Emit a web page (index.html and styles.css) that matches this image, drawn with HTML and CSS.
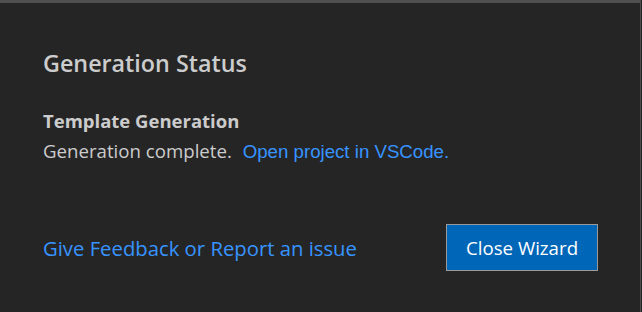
FILE: index.html
```html
<!DOCTYPE html>
<html>
<head>
<meta charset="utf-8">
<link rel="stylesheet" href="styles.css">
</head>
<body>
<div class="panel">
  <h2 class="title">Generation Status</h2>
  <div class="section">
    <div class="label">Template Generation</div>
    <div class="status">Generation complete. <a class="open-link" href="#">Open project in VSCode.</a></div>
  </div>
  <div class="footer">
    <a class="feedback" href="#">Give Feedback or Report an issue</a>
    <button class="close-btn">Close Wizard</button>
  </div>
</div>
</body>
</html>
```
FILE: styles.css
```css
html, body {
  margin: 0;
  padding: 0;
  background: #252526;
}
body {
  width: 642px;
  height: 312px;
  overflow: hidden;
  font-family: "Open Sans", sans-serif;
  color: #cccccc;
}
.panel {
  box-sizing: border-box;
  width: 641px;
  height: 312px;
  border-top: 3px solid #505050;
  border-right: 1px solid #4a4a4a;
  padding: 0 42px 0 43px;
  display: flex;
  flex-direction: column;
}
.title {
  margin: 44px 0 0 0;
  font-size: 23.3px;
  font-weight: 600;
  line-height: 32px;
}
.section {
  margin-top: 29px;
}
.label {
  font-size: 18.5px;
  font-weight: 700;
  line-height: 26px;
}
.status {
  font-size: 18.67px;
  line-height: 26px;
  margin-top: 4px;
}
.open-link {
  font-family: "Liberation Sans", Arial, sans-serif;
  color: #3794ff;
  text-decoration: none;
  margin-left: 6px;
}
.footer {
  margin-top: 59px;
  display: flex;
  justify-content: space-between;
  align-items: center;
}
.feedback {
  font-size: 20.3px;
  color: #3794ff;
  text-decoration: none;
}
.close-btn {
  font-family: "Open Sans", sans-serif;
  font-size: 18.7px;
  color: #ffffff;
  background: #0066b8;
  border: 1px solid #9a9a9a;
  width: 152px;
  height: 47px;
  padding: 0;
}
```
